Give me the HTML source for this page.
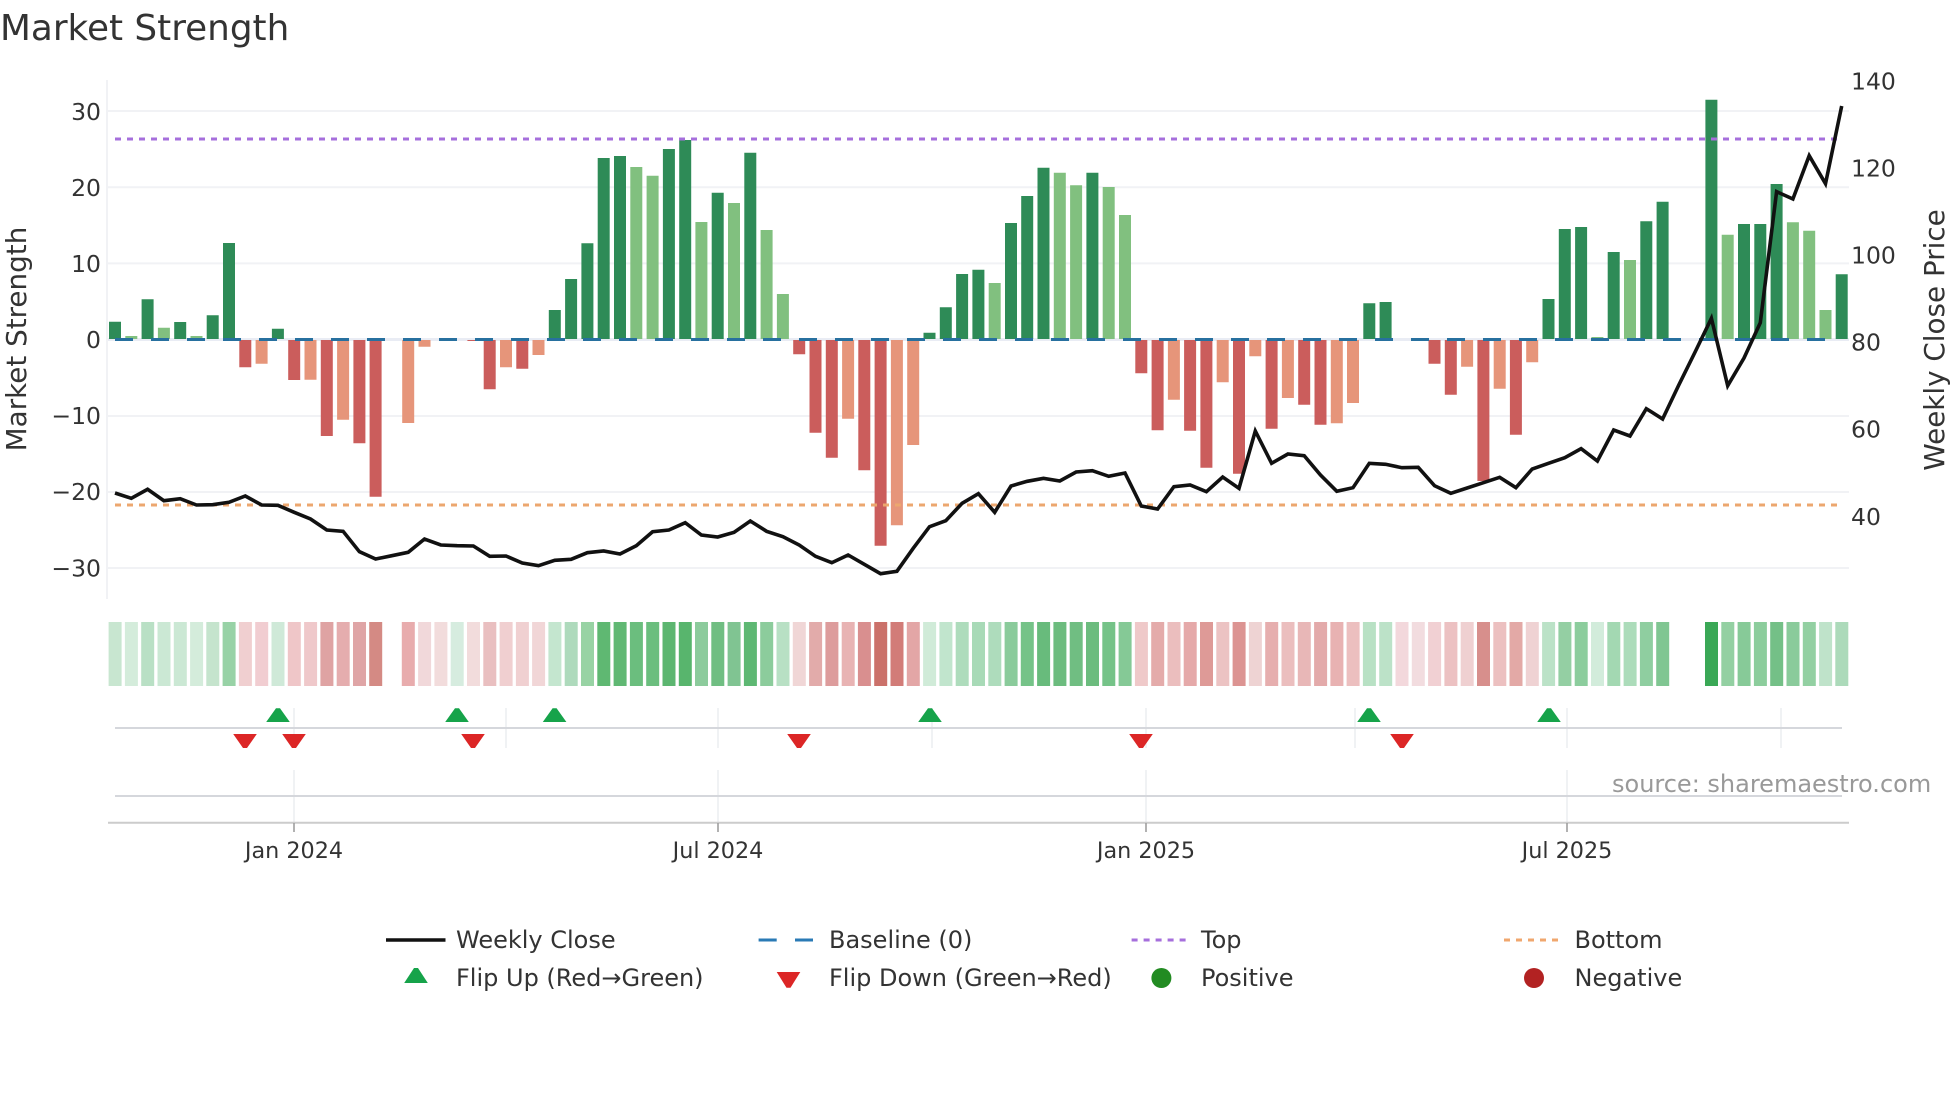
<!DOCTYPE html>
<html><head><meta charset="utf-8"><title>Market Strength</title>
<style>
html,body{margin:0;padding:0;background:#fff;width:1960px;height:1102px;overflow:hidden}
svg{display:block}
text{font-family:"DejaVu Sans","Liberation Sans",sans-serif;fill:#333}
</style></head><body>
<svg width="1960" height="1102" viewBox="0 0 1960 1102" xmlns="http://www.w3.org/2000/svg">
<rect width="1960" height="1102" fill="#fff"/>
<text x="0" y="40" font-size="35.8">Market Strength</text>

<!-- grid -->
<g stroke="#f1f2f5" stroke-width="2" fill="none">
<path d="M107 80V599"/>
<path d="M108 111H1849M108 187.3H1849M108 263.4H1849M108 416H1849M108 492H1849M108 568H1849"/>
<path d="M108 339.5H1849" stroke="#e9ecf4" stroke-width="3"/>
</g>

<!-- bars: dark green -->
<path fill="#2e8b57" d="M109 321.7h12V339h-12zM141.6 299.3h12V339h-12zM174.2 322h12V339h-12zM206.7 315.3h12V339h-12zM223 243h12V339h-12zM271.9 328.7h12V339h-12zM548.8 310h12V339h-12zM565.1 279h12V339h-12zM581.4 243.3h12V339h-12zM597.7 158h12V339h-12zM614 156h12V339h-12zM662.9 149h12V339h-12zM679.2 140h12V339h-12zM711.7 192.7h12V339h-12zM744.3 152.7h12V339h-12zM923.5 332.7h12V339h-12zM939.8 307.3h12V339h-12zM956.1 274h12V339h-12zM972.4 269.7h12V339h-12zM1005 223h12V339h-12zM1021.2 196h12V339h-12zM1037.5 167.7h12V339h-12zM1086.4 172.7h12V339h-12zM1363.3 303.3h12V339h-12zM1379.6 302h12V339h-12zM1542.5 299h12V339h-12zM1558.8 229h12V339h-12zM1575.1 227h12V339h-12zM1607.7 252h12V339h-12zM1640.3 221.3h12V339h-12zM1656.6 201.7h12V339h-12zM1705.4 99.7h12V339h-12zM1738 224h12V339h-12zM1754.3 224h12V339h-12zM1770.6 184h12V339h-12zM1835.7 274.3h12V339h-12z"/>
<!-- bars: light green -->
<path fill="#81c07f" d="M125.3 336h12V339h-12zM157.9 327.7h12V339h-12zM190.5 336h12V339h-12zM630.3 167h12V339h-12zM646.6 175.7h12V339h-12zM695.4 222h12V339h-12zM728 203h12V339h-12zM760.6 230h12V339h-12zM776.9 294h12V339h-12zM988.7 283h12V339h-12zM1053.8 172.7h12V339h-12zM1070.1 185.3h12V339h-12zM1102.7 187h12V339h-12zM1119 215h12V339h-12zM1591.4 337h12V339h-12zM1624 260h12V339h-12zM1721.7 234.7h12V339h-12zM1786.9 222.3h12V339h-12zM1803.2 230.7h12V339h-12zM1819.5 310h12V339h-12z"/>
<!-- bars: dark red -->
<path fill="#cb5d5c" d="M239.3 340h12V367.3h-12zM288.2 340h12V380h-12zM320.8 340h12V436h-12zM353.4 340h12V443.3h-12zM369.6 340h12V496.7h-12zM467.4 340h12V341h-12zM483.7 340h12V389.3h-12zM516.3 340h12V368.7h-12zM793.2 340h12V354.3h-12zM809.5 340h12V432.7h-12zM825.8 340h12V457.7h-12zM858.3 340h12V470.3h-12zM874.6 340h12V545.7h-12zM1135.3 340h12V373.3h-12zM1151.6 340h12V430.3h-12zM1184.1 340h12V430.7h-12zM1200.4 340h12V467.7h-12zM1233 340h12V473.7h-12zM1265.6 340h12V428.7h-12zM1298.2 340h12V404.7h-12zM1314.5 340h12V424.7h-12zM1428.5 340h12V363.7h-12zM1444.8 340h12V394.7h-12zM1477.4 340h12V481h-12zM1509.9 340h12V434.7h-12z"/>
<!-- bars: light red -->
<path fill="#e6957a" d="M255.6 340h12V363.7h-12zM304.5 340h12V379.7h-12zM337.1 340h12V419.7h-12zM402.2 340h12V423h-12zM418.5 340h12V346.7h-12zM500 340h12V367.3h-12zM532.5 340h12V355h-12zM842.1 340h12V418.7h-12zM890.9 340h12V525.3h-12zM907.2 340h12V445h-12zM1167.9 340h12V399.7h-12zM1216.7 340h12V382.3h-12zM1249.3 340h12V356.3h-12zM1281.9 340h12V398h-12zM1330.8 340h12V423.3h-12zM1347 340h12V403h-12zM1461.1 340h12V366.7h-12zM1493.7 340h12V388.7h-12zM1526.2 340h12V362.3h-12z"/>

<!-- reference lines -->
<path d="M115 339.5H1842" stroke="#27709f" stroke-width="3" stroke-dasharray="18 18" fill="none"/>
<path d="M115 139H1842" stroke="#a66fdc" stroke-width="3" stroke-dasharray="6 6" fill="none"/>
<path d="M115 505H1842" stroke="#eca76f" stroke-width="3" stroke-dasharray="6 6" fill="none"/>

<!-- price line -->
<polyline fill="none" stroke="#111" stroke-width="3.6" stroke-linejoin="miter" points="115,493 131.3,498.3 147.6,489.3 163.9,500.7 180.2,498.7 196.5,505 212.7,504.7 229,502.3 245.3,496 261.6,505 277.9,505.3 294.2,512.3 310.5,519 326.8,530 343.1,531.3 359.4,551.7 375.6,559 391.9,555.7 408.2,552.3 424.5,539 440.8,545 457.1,545.7 473.4,546 489.7,556.3 506,556 522.3,563 538.5,565.7 554.8,560.3 571.1,559.3 587.4,552.7 603.7,551 620,554 636.3,545.7 652.6,531.7 668.9,530 685.2,522.7 701.4,535 717.7,537 734,532.3 750.3,521 766.6,531.3 782.9,536.7 799.2,545 815.5,556.3 831.8,562.7 848.1,555 864.3,564.3 880.6,573.7 896.9,571.3 913.2,548.3 929.5,526.7 945.8,520.7 962.1,503.3 978.4,493.7 994.7,512.3 1011,486 1027.2,481.3 1043.5,478.3 1059.8,481 1076.1,472 1092.4,470.7 1108.7,476.3 1125,473 1141.3,506 1157.6,509 1173.9,486.7 1190.1,485 1206.4,491.7 1222.7,477 1239,488.3 1255.3,431 1271.6,463.3 1287.9,454 1304.2,455.7 1320.5,475 1336.8,491.3 1353,487.7 1369.3,463.3 1385.6,464.3 1401.9,467.7 1418.2,467.3 1434.5,485.7 1450.8,493.3 1467.1,488 1483.4,482.7 1499.7,477.3 1515.9,487.7 1532.2,469 1548.5,463.3 1564.8,457.7 1581.1,448.7 1597.4,461 1613.7,430 1630,436 1646.3,408.7 1662.6,419 1678.8,385 1695.1,352 1711.4,318.3 1727.7,385.7 1744,358 1760.3,322.7 1776.6,191.7 1792.9,199 1809.2,155.7 1825.5,183.7 1841.7,106"/>

<!-- y ticks -->
<g font-size="23.5" text-anchor="end" fill="#333">
<text x="101" y="120">30</text>
<text x="101" y="196">20</text>
<text x="101" y="272">10</text>
<text x="101" y="347.8">0</text>
<text x="101" y="424.2">−10</text>
<text x="101" y="500">−20</text>
<text x="101" y="576.6">−30</text>
</g>
<g font-size="23.5">
<text x="1851" y="89.6">140</text>
<text x="1851" y="176.4">120</text>
<text x="1851" y="263.4">100</text>
<text x="1851" y="350.4">80</text>
<text x="1851" y="437.3">60</text>
<text x="1851" y="525">40</text>
</g>
<text font-size="27.8" text-anchor="middle" transform="translate(26 339) rotate(-90)">Market Strength</text>
<text font-size="27.8" text-anchor="middle" transform="translate(1944 340) rotate(-90)">Weekly Close Price</text>

<!-- heat strip -->
<g>
<path fill="#c8e6d0" d="M108.6 622h13v64h-13z"/><path fill="#d4ecdb" d="M124.9 622h13v64h-13z"/><path fill="#b9e0c5" d="M141.2 622h13v64h-13z"/><path fill="#cbe8d4" d="M157.5 622h13v64h-13z"/><path fill="#cbe8d4" d="M173.8 622h13v64h-13z"/><path fill="#d4ecdb" d="M190.1 622h13v64h-13z"/><path fill="#c5e4cd" d="M206.3 622h13v64h-13z"/><path fill="#98d2a6" d="M222.6 622h13v64h-13z"/>
<path fill="#f0cfd0" d="M238.9 622h13v64h-13z"/><path fill="#f1cdd1" d="M255.2 622h13v64h-13z"/><path fill="#cfe9d8" d="M271.5 622h13v64h-13z"/><path fill="#efc6c8" d="M287.8 622h13v64h-13z"/><path fill="#efc8ca" d="M304.1 622h13v64h-13z"/><path fill="#dfa3a3" d="M320.4 622h13v64h-13z"/><path fill="#e5adae" d="M336.7 622h13v64h-13z"/><path fill="#dfa5a6" d="M353 622h13v64h-13z"/><path fill="#d48a84" d="M369.2 622h13v64h-13z"/>
<path fill="#e8acad" d="M401.8 622h13v64h-13z"/><path fill="#f1d8da" d="M418.1 622h13v64h-13z"/><path fill="#f2dcdc" d="M434.4 622h13v64h-13z"/><path fill="#d6ecdf" d="M450.7 622h13v64h-13z"/><path fill="#f2dcdc" d="M467 622h13v64h-13z"/><path fill="#e9bfc0" d="M483.3 622h13v64h-13z"/><path fill="#f0cfd0" d="M499.6 622h13v64h-13z"/><path fill="#f0d0d1" d="M515.9 622h13v64h-13z"/><path fill="#f1d6d7" d="M532.1 622h13v64h-13z"/>
<path fill="#c4e6cf" d="M548.4 622h13v64h-13z"/><path fill="#aedabc" d="M564.7 622h13v64h-13z"/><path fill="#98d3a4" d="M581 622h13v64h-13z"/><path fill="#5fb872" d="M597.3 622h13v64h-13z"/><path fill="#60b873" d="M613.6 622h13v64h-13z"/><path fill="#6bbe7e" d="M629.9 622h13v64h-13z"/><path fill="#6bbe7e" d="M646.2 622h13v64h-13z"/><path fill="#5cb670" d="M662.5 622h13v64h-13z"/><path fill="#58b56d" d="M678.8 622h13v64h-13z"/><path fill="#8ccb9c" d="M695 622h13v64h-13z"/><path fill="#70be82" d="M711.3 622h13v64h-13z"/><path fill="#80c492" d="M727.6 622h13v64h-13z"/><path fill="#5eb873" d="M743.9 622h13v64h-13z"/><path fill="#8ccc9c" d="M760.2 622h13v64h-13z"/><path fill="#b8e0c4" d="M776.5 622h13v64h-13z"/>
<path fill="#f0d6d6" d="M792.8 622h13v64h-13z"/><path fill="#e2abaa" d="M809.1 622h13v64h-13z"/><path fill="#dd9c9c" d="M825.4 622h13v64h-13z"/><path fill="#e8b3b3" d="M841.7 622h13v64h-13z"/><path fill="#d98f8f" d="M857.9 622h13v64h-13z"/><path fill="#cb716a" d="M874.2 622h13v64h-13z"/><path fill="#d27c78" d="M890.5 622h13v64h-13z"/><path fill="#e3a6a6" d="M906.8 622h13v64h-13z"/>
<path fill="#d0ebd8" d="M923.1 622h13v64h-13z"/><path fill="#c1e5cd" d="M939.4 622h13v64h-13z"/><path fill="#aedcbc" d="M955.7 622h13v64h-13z"/><path fill="#a8dab7" d="M972 622h13v64h-13z"/><path fill="#aedcbc" d="M988.3 622h13v64h-13z"/><path fill="#8acb9b" d="M1004.6 622h13v64h-13z"/><path fill="#75c388" d="M1020.8 622h13v64h-13z"/><path fill="#68bb7c" d="M1037.1 622h13v64h-13z"/><path fill="#6cbc7e" d="M1053.4 622h13v64h-13z"/><path fill="#70be82" d="M1069.7 622h13v64h-13z"/><path fill="#6cbc7e" d="M1086 622h13v64h-13z"/><path fill="#75c388" d="M1102.3 622h13v64h-13z"/><path fill="#85c996" d="M1118.6 622h13v64h-13z"/>
<path fill="#efc9c9" d="M1134.9 622h13v64h-13z"/><path fill="#e4abaa" d="M1151.2 622h13v64h-13z"/><path fill="#ebbebe" d="M1167.5 622h13v64h-13z"/><path fill="#e5a9a9" d="M1183.7 622h13v64h-13z"/><path fill="#de9a97" d="M1200 622h13v64h-13z"/><path fill="#ecc3c3" d="M1216.3 622h13v64h-13z"/><path fill="#dc9492" d="M1232.6 622h13v64h-13z"/><path fill="#eed3d3" d="M1248.9 622h13v64h-13z"/><path fill="#e6aeae" d="M1265.2 622h13v64h-13z"/><path fill="#ebbebe" d="M1281.5 622h13v64h-13z"/><path fill="#e8b7b7" d="M1297.8 622h13v64h-13z"/><path fill="#e3aaaa" d="M1314.1 622h13v64h-13z"/><path fill="#e8b2b2" d="M1330.4 622h13v64h-13z"/><path fill="#ecbfbf" d="M1346.6 622h13v64h-13z"/>
<path fill="#b8e1c4" d="M1362.9 622h13v64h-13z"/><path fill="#bce2c8" d="M1379.2 622h13v64h-13z"/><path fill="#f3d8dc" d="M1395.5 622h13v64h-13z"/><path fill="#f2dcdf" d="M1411.8 622h13v64h-13z"/><path fill="#f1d0d3" d="M1428.1 622h13v64h-13z"/><path fill="#ecc1c2" d="M1444.4 622h13v64h-13z"/><path fill="#efd0d1" d="M1460.7 622h13v64h-13z"/><path fill="#d78f8c" d="M1477 622h13v64h-13z"/><path fill="#ecc0c0" d="M1493.3 622h13v64h-13z"/><path fill="#e3a9a6" d="M1509.5 622h13v64h-13z"/><path fill="#efd2d3" d="M1525.8 622h13v64h-13z"/>
<path fill="#bbe2c7" d="M1542.1 622h13v64h-13z"/><path fill="#94cfa3" d="M1558.4 622h13v64h-13z"/><path fill="#8ccd9d" d="M1574.7 622h13v64h-13z"/><path fill="#d2ecdb" d="M1591 622h13v64h-13z"/><path fill="#a3d8b2" d="M1607.3 622h13v64h-13z"/><path fill="#acdcba" d="M1623.6 622h13v64h-13z"/><path fill="#8fcea0" d="M1639.9 622h13v64h-13z"/><path fill="#80c692" d="M1656.2 622h13v64h-13z"/>
<path fill="#3aa856" d="M1705 622h13v64h-13z"/><path fill="#93d0a2" d="M1721.3 622h13v64h-13z"/><path fill="#87ca98" d="M1737.6 622h13v64h-13z"/><path fill="#8ccd9c" d="M1753.9 622h13v64h-13z"/><path fill="#74c087" d="M1770.2 622h13v64h-13z"/><path fill="#8acb9b" d="M1786.5 622h13v64h-13z"/><path fill="#93d0a2" d="M1802.8 622h13v64h-13z"/><path fill="#bfe3ca" d="M1819.1 622h13v64h-13z"/><path fill="#acdaba" d="M1835.3 622h13v64h-13z"/>
</g>

<!-- flip rows -->
<g fill="none">
<path stroke="#ebedf0" stroke-width="1.5" d="M294 708V748M506 708V748M718 708V748M932 708V748M1146 708V748M1355 708V748M1567 708V748M1781 708V748"/>
<path stroke="#ebedf0" stroke-width="1.5" d="M294 770V823M718 770V823M1146 770V823M1567 770V823"/>
<path stroke="#d5d7dc" stroke-width="2" d="M115 728H1842M115 796H1842"/>
<path stroke="#ccc" stroke-width="2" d="M108 822.7H1849"/>
<path stroke="#999" stroke-width="1.5" d="M294 823V832M718 823V832M1146 823V832M1567 823V832"/>
</g>
<path fill="#16a34a" d="M266.2 722L276 708.3h4L289.8 722zM445.2 722L455 708.3h4L468.8 722zM542.8 722L552.6 708.3h4L566.4 722zM918.2 722L928 708.3h4L941.8 722zM1357.2 722L1367 708.3h4L1380.8 722zM1537.2 722L1547 708.3h4L1560.8 722z"/>
<path fill="#dc2626" d="M233.2 734L243 748h4L256.8 734zM282.2 734L292 748h4L305.8 734zM461.2 734L471 748h4L484.8 734zM787.2 734L797 748h4L810.8 734zM1129.2 734L1139 748h4L1152.8 734zM1390.2 734L1400 748h4L1413.8 734z"/>

<!-- x labels -->
<g font-size="22.3" text-anchor="middle">
<text x="294" y="858">Jan 2024</text>
<text x="718" y="858">Jul 2024</text>
<text x="1146" y="858">Jan 2025</text>
<text x="1567" y="858">Jul 2025</text>
</g>
<text x="1612" y="792" font-size="24" style="fill:#999">source: sharemaestro.com</text>

<!-- legend -->
<path d="M386 940H445.5" stroke="#111" stroke-width="3.4" fill="none"/>
<path d="M758.6 940H776.7M795 940H813" stroke="#2a7ab5" stroke-width="3" fill="none"/>
<path d="M1131.6 940H1186" stroke="#a66fdc" stroke-width="3" stroke-dasharray="6 6" fill="none"/>
<path d="M1504 940H1558" stroke="#f0a76e" stroke-width="3" stroke-dasharray="6 6" fill="none"/>
<path fill="#16a34a" d="M404.2 983L414 968h4L427.8 983z"/>
<path fill="#dc2626" d="M776.7 972L786.5 987.7h4L800.3 972z"/>
<circle cx="1161.4" cy="978" r="10" fill="#228b22"/>
<circle cx="1534" cy="978" r="10" fill="#b22222"/>
<g font-size="24">
<text x="456" y="948">Weekly Close</text>
<text x="829" y="948">Baseline (0)</text>
<text x="1201" y="948">Top</text>
<text x="1574.5" y="948">Bottom</text>
<text x="456" y="986">Flip Up (Red→Green)</text>
<text x="829" y="986">Flip Down (Green→Red)</text>
<text x="1201" y="986">Positive</text>
<text x="1574.5" y="986">Negative</text>
</g>
</svg>
</body></html>
